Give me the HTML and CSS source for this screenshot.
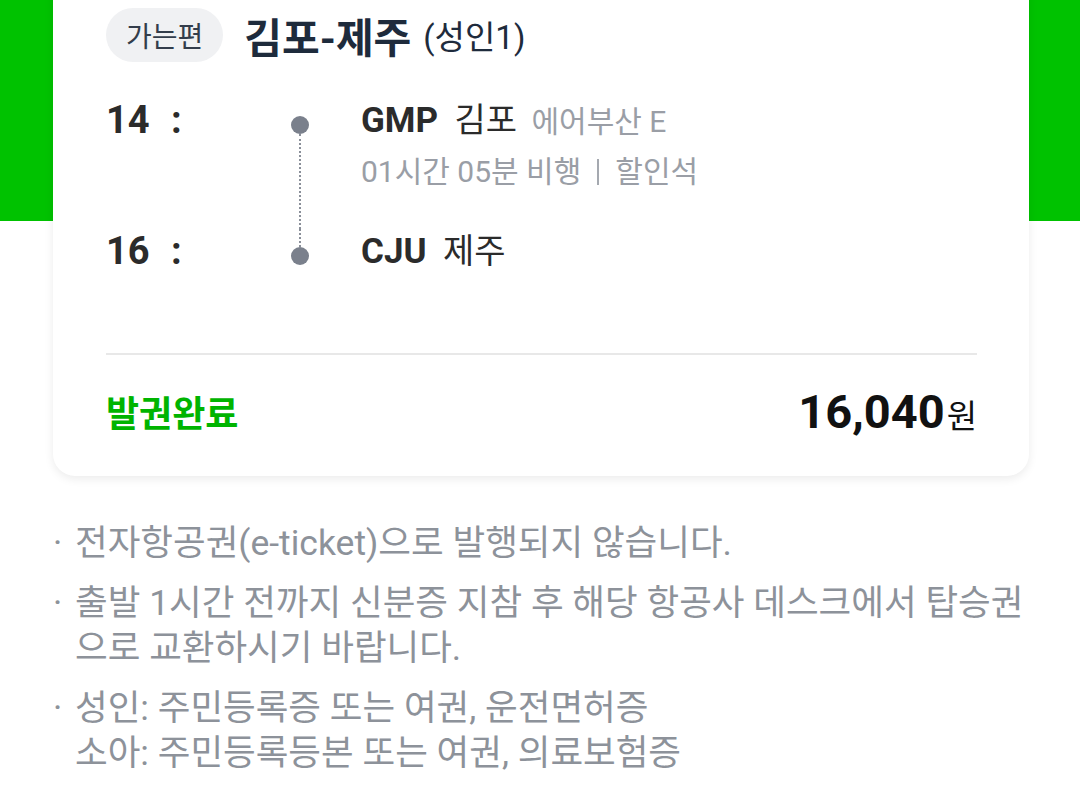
FILE: index.html
```html
<!DOCTYPE html>
<html lang="ko">
<head>
  <meta charset="UTF-8">
  <title>예약 상세</title>
  <link rel="stylesheet" href="styles.css">
</head>
<body>
  <div class="card">
    <div class="trip-head">
      <span class="pill">가는편</span>
      <span class="route-title">김포-제주</span>
      <span class="pax">(성인1)</span>
    </div>

    <div class="route">
      <div class="stop first">
        <div class="time">14 <span class="colon">:</span></div>
        <div class="track"><span class="dot"></span><span class="line"></span></div>
        <div class="info">
          <div class="place"><b>GMP</b> 김포 <span class="airline">에어부산 E</span></div>
          <div class="sub">01시간 05분 비행<span class="bar"></span>할인석</div>
        </div>
      </div>
      <div class="stop last">
        <div class="time">16 <span class="colon">:</span></div>
        <div class="track"><span class="line"></span><span class="dot"></span></div>
        <div class="info">
          <div class="place"><b>CJU</b> 제주</div>
        </div>
      </div>
    </div>

    <div class="card-foot">
      <span class="status">발권완료</span>
      <span class="price">16,040<small>원</small></span>
    </div>
  </div>

  <ul class="notes">
    <li>전자항공권(e-ticket)으로 발행되지 않습니다.</li>
    <li>출발 1시간 전까지 신분증 지참 후 해당 항공사 데스크에서 탑승권으로 교환하시기 바랍니다.</li>
    <li>성인: 주민등록증 또는 여권, 운전면허증<br>소아: 주민등록등본 또는 여권, 의료보험증</li>
  </ul>
</body>
</html>
```
FILE: styles.css
```css
html {
  background: #fff;
}
body {
  margin: 0;
  font-family: Roboto, "Noto Sans CJK KR", sans-serif;
  background: #fff linear-gradient(#00c200, #00c200) no-repeat;
  background-size: 100% 221px;
  color: #333;
}

.card {
  margin: -40px 51px 0 53px;
  padding: 48px 52px 0 53px;
  background: #fff;
  border-radius: 22px;
  box-shadow: 0 3px 10px rgba(0, 0, 0, 0.08);
}

/* 상단: 가는편 + 구간 */
.trip-head {
  display: flex;
  align-items: center;
  height: 54px;
}
.pill {
  display: inline-flex;
  align-items: center;
  height: 54px;
  padding: 0 20px;
  border-radius: 27px;
  background: #f0f1f3;
  color: #333d4b;
  font-size: 28px;
}
.route-title {
  margin-left: 21px;
  font-size: 41px;
  font-weight: bold;
  color: #1e2b3c;
}
.pax {
  margin-left: 12px;
  font-size: 33px;
  color: #1e2b3c;
}

/* 출발/도착 */
.route {
  margin-top: 36px;
}
.stop {
  display: grid;
  grid-template-columns: 176px 36px 1fr;
}
.stop.first {
  padding-bottom: 37px;
}
.time {
  font-size: 38px;
  font-weight: bold;
  line-height: 44px;
  color: #2b2b2b;
}
.colon {
  margin-left: 12px;
}
.track {
  display: flex;
  flex-direction: column;
  align-items: center;
}
.first .track {
  padding-top: 18px;
  margin-bottom: -37px;
}
.dot {
  width: 18px;
  height: 18px;
  border-radius: 50%;
  background: #7a808c;
  flex: none;
}
.line {
  width: 0;
  border-left: 2px dotted #8a8f99;
}
.first .line {
  flex: 1;
}
.last .line {
  height: 18px;
}
.info {
  padding-left: 43px;
}
.place {
  font-size: 34px;
  line-height: 44px;
  color: #2b2b2b;
}
.place b {
  font-size: 35px;
  margin-right: 8px;
}
.airline {
  margin-left: 6px;
  font-size: 30px;
  color: #9a9ea6;
}
.sub {
  font-size: 30px;
  line-height: 40px;
  margin-top: 8px;
  color: #9a9ea6;
}
.bar {
  display: inline-block;
  width: 2px;
  height: 26px;
  margin: 0 16px -3px;
  background: #a5a9b0;
}

/* 하단 */
.card-foot {
  display: flex;
  justify-content: space-between;
  align-items: center;
  margin-top: 79px;
  padding: 28px 0 37px;
  border-top: 2px solid #e8e8e8;
  height: 56px;
}
.status {
  font-size: 36px;
  font-weight: bold;
  color: #00b400;
}
.price {
  font-size: 47px;
  font-weight: bold;
  color: #111;
}
.price small {
  font-size: 33px;
  font-weight: normal;
  margin-left: 2px;
}

/* 안내 */
.notes {
  list-style: none;
  margin: 45px 36px 0 55px;
  padding: 0;
  color: #8d929a;
  font-size: 35.5px;
  line-height: 45px;
}
.notes li {
  position: relative;
  padding-left: 20px;
  margin-bottom: 15px;
}
.notes li::before {
  content: "·";
  position: absolute;
  left: -2px;
  top: 0;
}
```
